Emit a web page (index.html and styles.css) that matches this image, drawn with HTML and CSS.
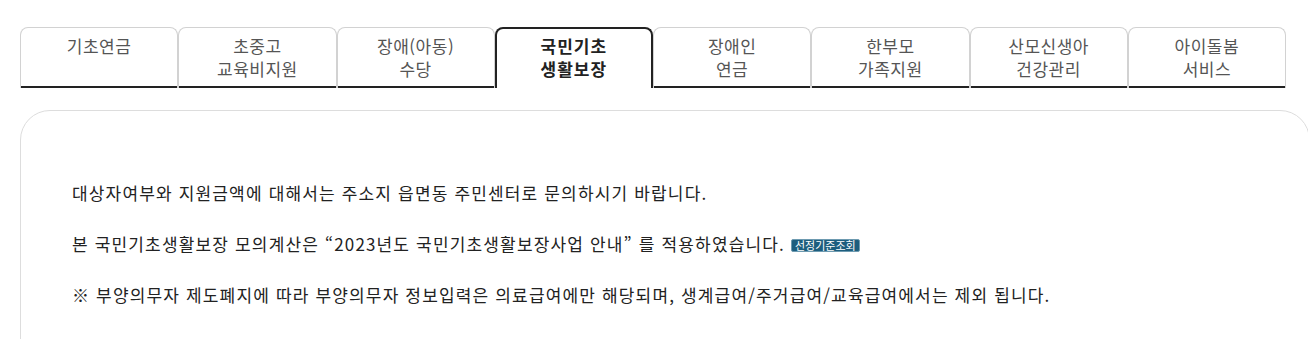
FILE: index.html
```html
<!DOCTYPE html>
<html lang="ko">
<head>
<meta charset="utf-8">
<title>국민기초생활보장</title>
<link rel="stylesheet" href="styles.css">
</head>
<body>
<div class="page">
  <ul class="tabs">
    <li class="tab">기초연금</li>
    <li class="tab">초중고<br>교육비지원</li>
    <li class="tab">장애(아동)<br>수당</li>
    <li class="tab active">국민기초<br>생활보장</li>
    <li class="tab">장애인<br>연금</li>
    <li class="tab">한부모<br>가족지원</li>
    <li class="tab">산모신생아<br>건강관리</li>
    <li class="tab">아이돌봄<br>서비스</li>
  </ul>
  <div class="panel">
    <p class="line">대상자여부와 지원금액에 대해서는 주소지 읍면동 주민센터로 문의하시기 바랍니다.</p>
    <p class="line">본 국민기초생활보장 모의계산은 “2023년도 국민기초생활보장사업 안내” 를 적용하였습니다. <span class="badge">선정기준조회</span></p>
    <p class="line">※ 부양의무자 제도폐지에 따라 부양의무자 정보입력은 의료급여에만 해당되며, 생계급여/주거급여/교육급여에서는 제외 됩니다.</p>
  </div>
</div>
</body>
</html>
```
FILE: styles.css
```css
html, body {
  margin: 0;
  padding: 0;
  background: #fff;
  overflow: hidden;
}
body {
  font-family: "Noto Sans CJK KR", "Noto Sans", sans-serif;
  color: #222;
}
.page {
  padding: 27px 0 0 20px;
  width: 1290px;
}
.tabs {
  list-style: none;
  margin: 0;
  padding: 0;
  width: 1266px;
  display: grid;
  grid-template-columns: repeat(8, 1fr);
  align-items: end;
}
.tab {
  height: 61px;
  box-sizing: border-box;
  border: 1px solid #d2d2d2;
  border-bottom: none;
  border-radius: 8px 8px 0 0;
  text-align: center;
  font-size: 17px;
  letter-spacing: 0.5px;
  line-height: 23px;
  color: #555;
  padding-top: 6px;
  box-shadow: inset 0 -2px 0 #222;
}
.tab.active {
  border: 2px solid #222;
  border-bottom: none;
  box-shadow: none;
  color: #222;
  font-weight: bold;
  letter-spacing: 1px;
  padding-top: 5px;
}
.panel {
  margin-top: 22px;
  border: 1px solid #ddd;
  border-radius: 30px;
  padding: 70px 51px 20px;
  height: 300px;
}
.line {
  margin: 0 0 27px;
  font-size: 17px;
  letter-spacing: 1.16px;
  line-height: 24px;
  color: #222;
}
.badge {
  display: inline-block;
  vertical-align: 1px;
  background: #1d5e7e;
  color: #fff;
  font-size: 11px;
  letter-spacing: 0;
  line-height: 11px;
  padding: 0 3px;
  border-radius: 2px;
  border: 1px solid #6d9ab0;
}
```
